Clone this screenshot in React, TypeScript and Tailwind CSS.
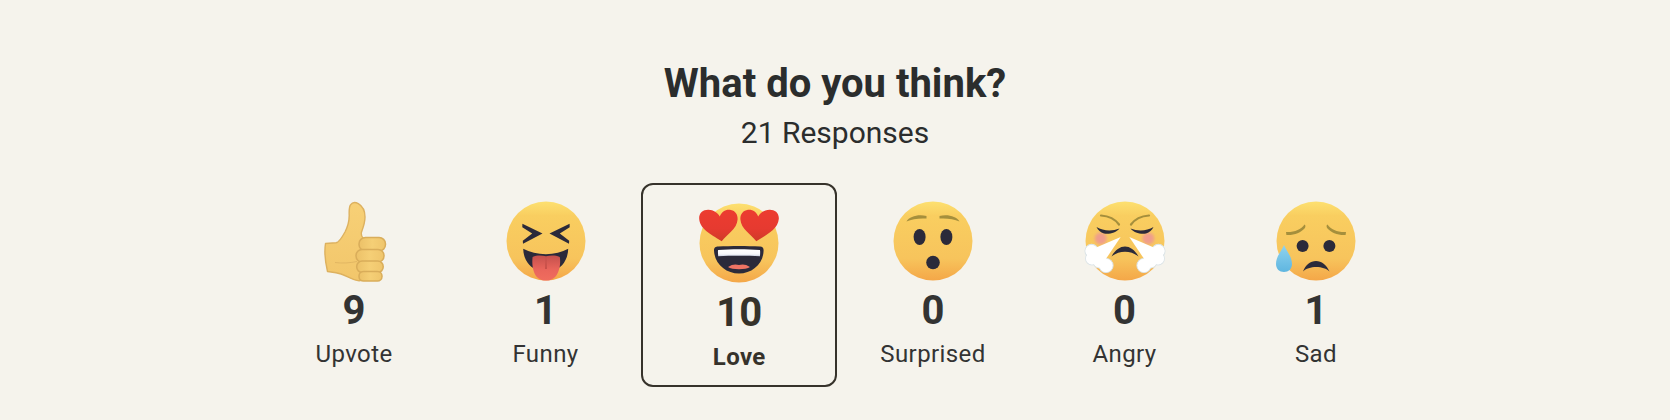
import React from "react";

const INK = "#2b2a3a";
const BROW = "#a58f3c";

function Svg({ children }: { children: React.ReactNode }) {
  return (
    <svg viewBox="0 0 80 80" width={80} height={80} className="block overflow-visible">
      {children}
    </svg>
  );
}

function FaceBase({ id }: { id: string }) {
  return (
    <>
      <defs>
        <linearGradient id={id} x1="0" y1="0" x2="0" y2="1">
          <stop offset="0" stopColor="#fde070" />
          <stop offset="0.18" stopColor="#f9ce60" />
          <stop offset="0.72" stopColor="#f7c45c" />
          <stop offset="1" stopColor="#f4a748" />
        </linearGradient>
      </defs>
      <circle cx="40" cy="40" r="39.5" fill={`url(#${id})`} />
    </>
  );
}

function Thumb() {
  const fingers = [
    [45, 36.5, 26.5, 13.5],
    [42, 48.5, 28, 12.5],
    [42.7, 60, 26.5, 11.5],
    [45, 70.5, 23, 9.5],
  ];
  return (
    <Svg>
      <defs>
        <linearGradient id="th" x1="0" y1="0" x2="0" y2="1">
          <stop offset="0" stopColor="#f7d076" />
          <stop offset="1" stopColor="#f2c66b" />
        </linearGradient>
        <linearGradient id="fg" x1="0" y1="0" x2="1" y2="0">
          <stop offset="0" stopColor="#ecc168" />
          <stop offset="0.5" stopColor="#f5cf76" />
          <stop offset="1" stopColor="#efc56c" />
        </linearGradient>
      </defs>
      <path
        d="M11.5 42.5 L22 41.8 C25 41.5 28 36.5 31 31 C33.5 26 35.3 21 35.2 14 C35 9 35 6 36.5 3.8 C38.3 1.2 41.5 1 44.3 2.6 C48.5 5 51 10 51 16 C51 22 49 27 47.5 31 C47 33.5 47.5 35.5 49 37 L49 76 C48 79.5 46 80 44 79.6 C38 79 32 74.5 27 73 C22 71.5 17 71 13.5 70.5 C11.5 62 10 52 11.5 42.5 Z"
        fill="url(#th)"
        stroke="#ddb15f"
        strokeWidth="1.4"
        strokeLinejoin="round"
      />
      <path d="M21 61.5 C28 62.5 36 62 43 60.5" fill="none" stroke="#ddb15f" strokeWidth="0.8" />
      {fingers.map(([x, y, w, h], i) => (
        <rect key={i} x={x} y={y} width={w} height={h} rx={h / 2.1} fill="url(#fg)" stroke="#d9ad5a" strokeWidth="1.5" />
      ))}
    </Svg>
  );
}

function Funny() {
  return (
    <Svg>
      <FaceBase id="f1" />
      <defs>
        <linearGradient id="tg" x1="0" y1="0" x2="0" y2="1">
          <stop offset="0" stopColor="#c4504c" />
          <stop offset="0.55" stopColor="#e9655b" />
          <stop offset="1" stopColor="#f06d5e" />
        </linearGradient>
      </defs>
      <path d="M16.4 22.8 L36.5 32.6 L17 42.7 L16.8 39.8 L26.2 32.6 L16.3 26.2 Z" fill={INK} />
      <path d="M63.6 22.8 L43.5 32.6 L63 42.7 L63.2 39.8 L53.8 32.6 L63.7 26.2 Z" fill={INK} />
      <path d="M17.2 47.8 C30 55 50 55 62.2 47.8 C62 59 55 68 48 69 L32 69 C24 67 17.4 59 17.2 47.8 Z" fill={INK} />
      <path d="M26.6 56 C31 53.8 36 54.4 40 55.2 C44 54.4 49 53.8 53.8 56 C54.8 62 53.8 70 50 75 C47 78.8 43 79.6 40 79.6 C37 79.6 33 78.8 30 75 C26.6 70 25.8 62 26.6 56 Z" fill="url(#tg)" />
      <path d="M40 55 L40.6 68 L39.4 68 Z" fill="#b0433f" />
    </Svg>
  );
}

function Heart({ id, flip }: { id: string; flip?: boolean }) {
  return (
    <path
      transform={flip ? "translate(80 0) scale(-1 1)" : undefined}
      d="M22.7 38.3 C15 33 1 27 0.2 16 C-0.3 9.5 4.5 6.5 9.5 6.7 C14.5 6.9 18.5 9.5 20.8 13.5 C22.5 9 26.5 6.2 31 6.8 C36 7.5 39 11.5 38.6 16.5 C38 26 28 31 22.7 38.3 Z"
      fill={`url(#${id})`}
    />
  );
}

function Love() {
  return (
    <Svg>
      <FaceBase id="f2" />
      <defs>
        <linearGradient id="hg" x1="0" y1="0" x2="0" y2="1">
          <stop offset="0" stopColor="#ec3c30" />
          <stop offset="0.6" stopColor="#e63a30" />
          <stop offset="1" stopColor="#cf3b28" />
        </linearGradient>
        <linearGradient id="tw" x1="0" y1="0" x2="0" y2="1">
          <stop offset="0" stopColor="#ffffff" />
          <stop offset="0.7" stopColor="#f6f7fb" />
          <stop offset="1" stopColor="#c9cfe0" />
        </linearGradient>
      </defs>
      <Heart id="hg" />
      <Heart id="hg" flip />
      <path d="M15 47.5 C15 44.5 17 43.6 19 43.6 C32 42.8 48 42.8 61 43.6 C63.5 43.6 64.6 45 64.6 47.5 C64.4 61 53 70.5 40 70.5 C27 70.5 15.5 61 15 47.5 Z" fill={INK} />
      <path d="M19.5 47 C32 46 48 46 60.5 47 C61.2 47 61.3 47.6 61 53.2 C48 52.6 32 52.6 19.2 53.2 C18.8 47.6 18.8 47 19.5 47 Z" fill="url(#tw)" />
      <path d="M29 64 C33 61 37 61 40 62 C43 61 47 61 51 64 C47 67 33 67 29 64 Z" fill="#ef7464" />
    </Svg>
  );
}

function Surprised() {
  return (
    <Svg>
      <FaceBase id="f3" />
      <path d="M13.5 20.5 C16.5 15.5 25 13 33.5 15 L33.5 17.5 C26 17 19 18 13.5 20.5 Z" fill={BROW} />
      <path d="M66.5 20.5 C63.5 15.5 55 13 46.5 15 L46.5 17.5 C54 17 61 18 66.5 20.5 Z" fill={BROW} />
      <ellipse cx="26.6" cy="36" rx="6" ry="8" fill={INK} />
      <ellipse cx="53.4" cy="36" rx="6" ry="8" fill={INK} />
      <ellipse cx="40" cy="61.5" rx="6.8" ry="6.8" fill={INK} />
    </Svg>
  );
}

function Angry() {
  return (
    <Svg>
      <FaceBase id="f4" />
      <defs>
        <filter id="bl" x="-50%" y="-50%" width="200%" height="200%">
          <feGaussianBlur stdDeviation="1.6" />
        </filter>
      </defs>
      <circle cx="15.7" cy="37.5" r="6" fill="#ef9d8c" filter="url(#bl)" />
      <circle cx="63.3" cy="37.5" r="6" fill="#ef9d8c" filter="url(#bl)" />
      <path d="M16 14.5 C23 15 30 18 34 23.5" fill="none" stroke={BROW} strokeWidth="2.2" strokeLinecap="round" />
      <path d="M64 14.5 C57 15 50 18 46 23.5" fill="none" stroke={BROW} strokeWidth="2.2" strokeLinecap="round" />
      <path d="M11.5 26 C18 30 27 30.5 34.5 27.5 C31 32 24 33.5 19 32.5 C15.5 31.5 13 29 11.5 26 Z" fill={INK} />
      <path d="M68.5 26 C62 30 53 30.5 45.5 27.5 C49 32 56 33.5 61 32.5 C64.5 31.5 67 29 68.5 26 Z" fill={INK} />
      <path d="M26.5 55.5 C30 49 35 45.5 40 45.5 C45 45.5 50 49 53.5 55.5 C46 49 34 49 26.5 55.5 Z" fill={INK} />
      {[0, 1].map((i) => (
        <g key={i} transform={i ? "translate(80 0) scale(-1 1)" : undefined}>
          <g fill="#ffffff" stroke="#dde5e8" strokeWidth="1.2">
            <circle cx="6.6" cy="50" r="6.6" />
            <circle cx="7" cy="57.5" r="6.4" />
            <circle cx="21" cy="64.5" r="7" />
            <circle cx="14.5" cy="60.5" r="6.5" />
          </g>
          <g fill="#ffffff">
            <circle cx="6.6" cy="50" r="6.1" />
            <circle cx="7" cy="57.5" r="5.9" />
            <circle cx="21" cy="64.5" r="6.5" />
            <circle cx="14.5" cy="60.5" r="6" />
            <path d="M35.7 36 L10 47 L10 56 L19.5 60 Z" />
          </g>
        </g>
      ))}
    </Svg>
  );
}

function Sad() {
  return (
    <Svg>
      <FaceBase id="f5" />
      <defs>
        <linearGradient id="dr" x1="0" y1="0" x2="0" y2="1">
          <stop offset="0" stopColor="#8fd3ef" />
          <stop offset="1" stopColor="#5fb6e0" />
        </linearGradient>
      </defs>
      <path d="M10 31 C18 31.5 25 28.5 28.5 23.5 C30 24.5 29.5 26 28.5 27.5 C25 31.5 18 34.5 10.4 34 Z" fill={BROW} />
      <path d="M70 31 C62 31.5 55 28.5 51.5 23.5 C50 24.5 50.5 26 51.5 27.5 C55 31.5 62 34.5 69.6 34 Z" fill={BROW} />
      <circle cx="26.6" cy="45" r="6" fill={INK} />
      <circle cx="53.4" cy="45" r="6" fill={INK} />
      <path d="M27 70.5 C29.5 64 34.5 60 40 60 C45.5 60 50.5 64 53.5 70.5 C48 64.5 32.5 64.5 27 70.5 Z" fill={INK} />
      <path d="M8 44 C10.5 50 16 55.5 16 63 C16 68 12.5 71 8 71 C3.5 71 0 68 0 63 C0 55.5 5.5 50 8 44 Z" fill="url(#dr)" />
    </Svg>
  );
}

const items = [
  { Icon: Thumb, count: 9, label: "Upvote" },
  { Icon: Funny, count: 1, label: "Funny" },
  { Icon: Love, count: 10, label: "Love", active: true },
  { Icon: Surprised, count: 0, label: "Surprised" },
  { Icon: Angry, count: 0, label: "Angry" },
  { Icon: Sad, count: 1, label: "Sad" },
];

export default function App() {
  return (
    <div className="h-[420px] w-full overflow-hidden bg-[#f5f3ec] pt-[60px] font-['Roboto',sans-serif] text-[#333333]">
      <h2 className="text-center text-[40px] font-bold leading-[48px] text-[#2b2d2d]">What do you think?</h2>
      <p className="mt-[7px] text-center text-[30px] leading-[36px] text-[#2b2d2d]">21 Responses</p>
      <div className="mt-[32px] flex justify-center">
        {items.map(({ Icon, count, label, active }) => (
          <div
            key={label}
            className={
              active
                ? "flex h-[204px] w-[196px] flex-col items-center rounded-[12px] border-2 border-[#36322b] pt-[18px] text-[#36322b]"
                : "flex h-[204px] w-[191.5px] flex-col items-center pt-[18px]"
            }
          >
            <Icon />
            <div className="mt-[5px] text-[40px] font-bold leading-[50px]">{count}</div>
            <div className={"text-[24px] leading-[30px] tracking-[0.4px] " + (active ? "mt-[4px] font-bold" : "mt-[3px]")}>{label}</div>
          </div>
        ))}
      </div>
    </div>
  );
}
